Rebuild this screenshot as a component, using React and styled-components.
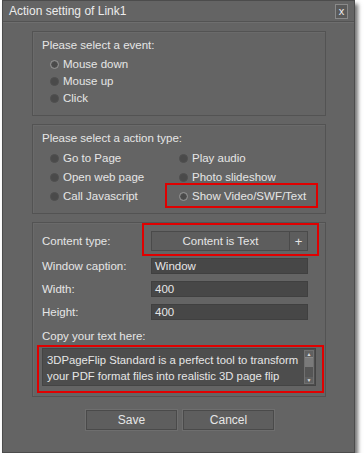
import React from "react";
import styled, { createGlobalStyle } from "styled-components";

const Global = createGlobalStyle`
  body {
    margin: 0;
    background: #ffffff;
    font-family: "Liberation Sans", Arial, sans-serif;
  }
`;

const Page = styled.div`
  padding: 0 0 0 2px;
`;

const Dialog = styled.div`
  width: 353px;
  height: 453px;
  box-sizing: border-box;
  background: #646464;
  border: 1px solid #4c4c4c;
  box-shadow: 3px 4px 4px rgba(0, 0, 0, 0.55);
  color: #e6e6e6;
  font-size: 11.5px;
  display: flex;
  flex-direction: column;
`;

const TitleBar = styled.div`
  height: 20px;
  display: flex;
  align-items: center;
  justify-content: space-between;
  padding: 0 6px 0 6px;
  border-bottom: 1px solid #535353;
  box-shadow: 0 1px 0 #6e6e6e;
  font-size: 12px;
  color: #ececec;
`;

const CloseBox = styled.div`
  width: 11px;
  height: 13px;
  border: 1px solid #8a8a8a;
  background: #5a5a5a;
  display: flex;
  align-items: center;
  justify-content: center;
  font-size: 11px;
  line-height: 1;
  color: #f0f0f0;
`;

const Body = styled.div`
  padding: 9px 28px 0 29px;
  display: flex;
  flex-direction: column;
  gap: 8px;
`;

const Panel = styled.div`
  border: 1px solid #535353;
  box-shadow: inset 1px 1px 0 #6a6a6a;
  padding: ${(p) => p.$pad || "8px 9px"};
  display: flex;
  flex-direction: column;
`;

const Heading = styled.div`
  line-height: 16px;
  margin-top: ${(p) => p.$top || 0}px;
  margin-bottom: ${(p) => p.$gap || 3}px;
`;

const RadioList = styled.div`
  display: flex;
  flex-direction: column;
  gap: 1px;
  padding-left: 8px;
`;

const RadioGrid = styled.div`
  display: grid;
  grid-template-columns: 129px 1fr;
  row-gap: 3px;
  padding-left: 8px;
`;

const RadioRow = styled.div`
  display: flex;
  align-items: center;
  gap: 4px;
  height: 16px;
  white-space: nowrap;
`;

const Dot = styled.span`
  width: 7px;
  height: 7px;
  border-radius: 50%;
  background: #4a4a4a;
  border: 1px solid ${(p) => (p.$on ? "#9a9a9a" : "#4f4f4f")};
  box-shadow: ${(p) => (p.$on ? "inset 0 0 0 1px #555" : "none")};
`;

const Marked = styled.div`
  position: relative;
  &::after {
    content: "";
    position: absolute;
    left: ${(p) => p.$l}px;
    right: ${(p) => p.$r}px;
    top: ${(p) => p.$t}px;
    bottom: ${(p) => p.$b}px;
    border: 2px solid #e00000;
    pointer-events: none;
  }
`;

const Form = styled.div`
  display: grid;
  grid-template-columns: 109px 157px;
  row-gap: 7px;
  align-items: center;
`;

const Label = styled.div`
  line-height: 16px;
`;

const Combo = styled.div`
  height: 18px;
  display: flex;
  border: 1px solid #4a4a4a;
  background: #5d5d5d;
`;

const ComboText = styled.div`
  flex: 1;
  display: flex;
  align-items: center;
  justify-content: center;
  border-right: 1px solid #4a4a4a;
`;

const ComboPlus = styled.div`
  width: 17px;
  display: flex;
  align-items: center;
  justify-content: center;
  font-size: 13px;
`;

const Input = styled.div`
  height: 16px;
  box-sizing: border-box;
  background: #474747;
  border: 1px solid #404040;
  padding-left: 3px;
  line-height: 14px;
`;

const TextBox = styled.div`
  display: flex;
  height: 36px;
  background: #4d4d4d;
  border: 1px solid #444;
`;

const TextContent = styled.div`
  flex: 1;
  padding: 3px 4px;
  line-height: 16px;
  font-size: 11.3px;
  white-space: nowrap;
  overflow: hidden;
`;

const ScrollBar = styled.div`
  width: 8px;
  margin: 1px 1px 1px 0;
  display: flex;
  flex-direction: column;
  background: #5a5a5a;
  border: 1px solid #707070;
`;

const Arrow = styled.div`
  height: 6px;
  display: flex;
  align-items: center;
  justify-content: center;
  font-size: 5px;
  color: #ddd;
  background: #606060;
`;

const Thumb = styled.div`
  height: 9px;
  background: #7a7a7a;
  border-top: 1px solid #888;
  border-bottom: 1px solid #555;
`;

const Track = styled.div`
  flex: 1;
  background: #555;
`;

const Footer = styled.div`
  display: flex;
  justify-content: center;
  gap: 6px;
  margin-top: 5px;
  padding-left: 2px;
`;

const Button = styled.div`
  width: 91px;
  height: 20px;
  box-sizing: border-box;
  border: 1px solid #4a4a4a;
  background: #5e5e5e;
  box-shadow: 0 0 0 1px #6e6e6e;
  display: flex;
  align-items: center;
  justify-content: center;
  font-size: 12px;
`;

const Radio = ({ on, children }) => (
  <RadioRow>
    <Dot $on={on} />
    {children}
  </RadioRow>
);

export default function App() {
  return (
    <Page>
      <Global />
      <Dialog>
        <TitleBar>
          <span>Action setting of Link1</span>
          <CloseBox>x</CloseBox>
        </TitleBar>
        <Body>
          <Panel $pad="5px 9px 9px">
            <Heading>Please select a event:</Heading>
            <RadioList>
              <Radio on>Mouse down</Radio>
              <Radio>Mouse up</Radio>
              <Radio>Click</Radio>
            </RadioList>
          </Panel>
          <Panel $pad="5px 9px 9px">
            <Heading $gap={4}>Please select a action type:</Heading>
            <RadioGrid>
              <Radio>Go to Page</Radio>
              <Radio>Play audio</Radio>
              <Radio>Open web page</Radio>
              <Radio>Photo slideshow</Radio>
              <Radio>Call Javascript</Radio>
              <Marked $l={-14} $r={-2} $t={-5} $b={-4}>
                <Radio on>Show Video/SWF/Text</Radio>
              </Marked>
            </RadioGrid>
          </Panel>
          <Panel $pad="8px 9px 10px">
            <Form>
              <Label>Content type:</Label>
              <Marked $l={-9} $r={-11} $t={-8} $b={-5}>
                <Combo>
                  <ComboText>Content is Text</ComboText>
                  <ComboPlus>+</ComboPlus>
                </Combo>
              </Marked>
              <Label>Window caption:</Label>
              <Input>Window</Input>
              <Label>Width:</Label>
              <Input>400</Input>
              <Label>Height:</Label>
              <Input>400</Input>
            </Form>
            <Heading $top={8} $gap={4}>Copy your text here:</Heading>
            <Marked $l={-5} $r={-8} $t={-3} $b={-7}>
              <TextBox>
                <TextContent>
                  3DPageFlip Standard is a perfect tool to transform
                  <br />
                  your PDF format files into realistic 3D page flip
                </TextContent>
                <ScrollBar>
                  <Arrow>▲</Arrow>
                  <Thumb />
                  <Track />
                  <Arrow>▼</Arrow>
                </ScrollBar>
              </TextBox>
            </Marked>
          </Panel>
          <Footer>
            <Button>Save</Button>
            <Button>Cancel</Button>
          </Footer>
        </Body>
      </Dialog>
    </Page>
  );
}
